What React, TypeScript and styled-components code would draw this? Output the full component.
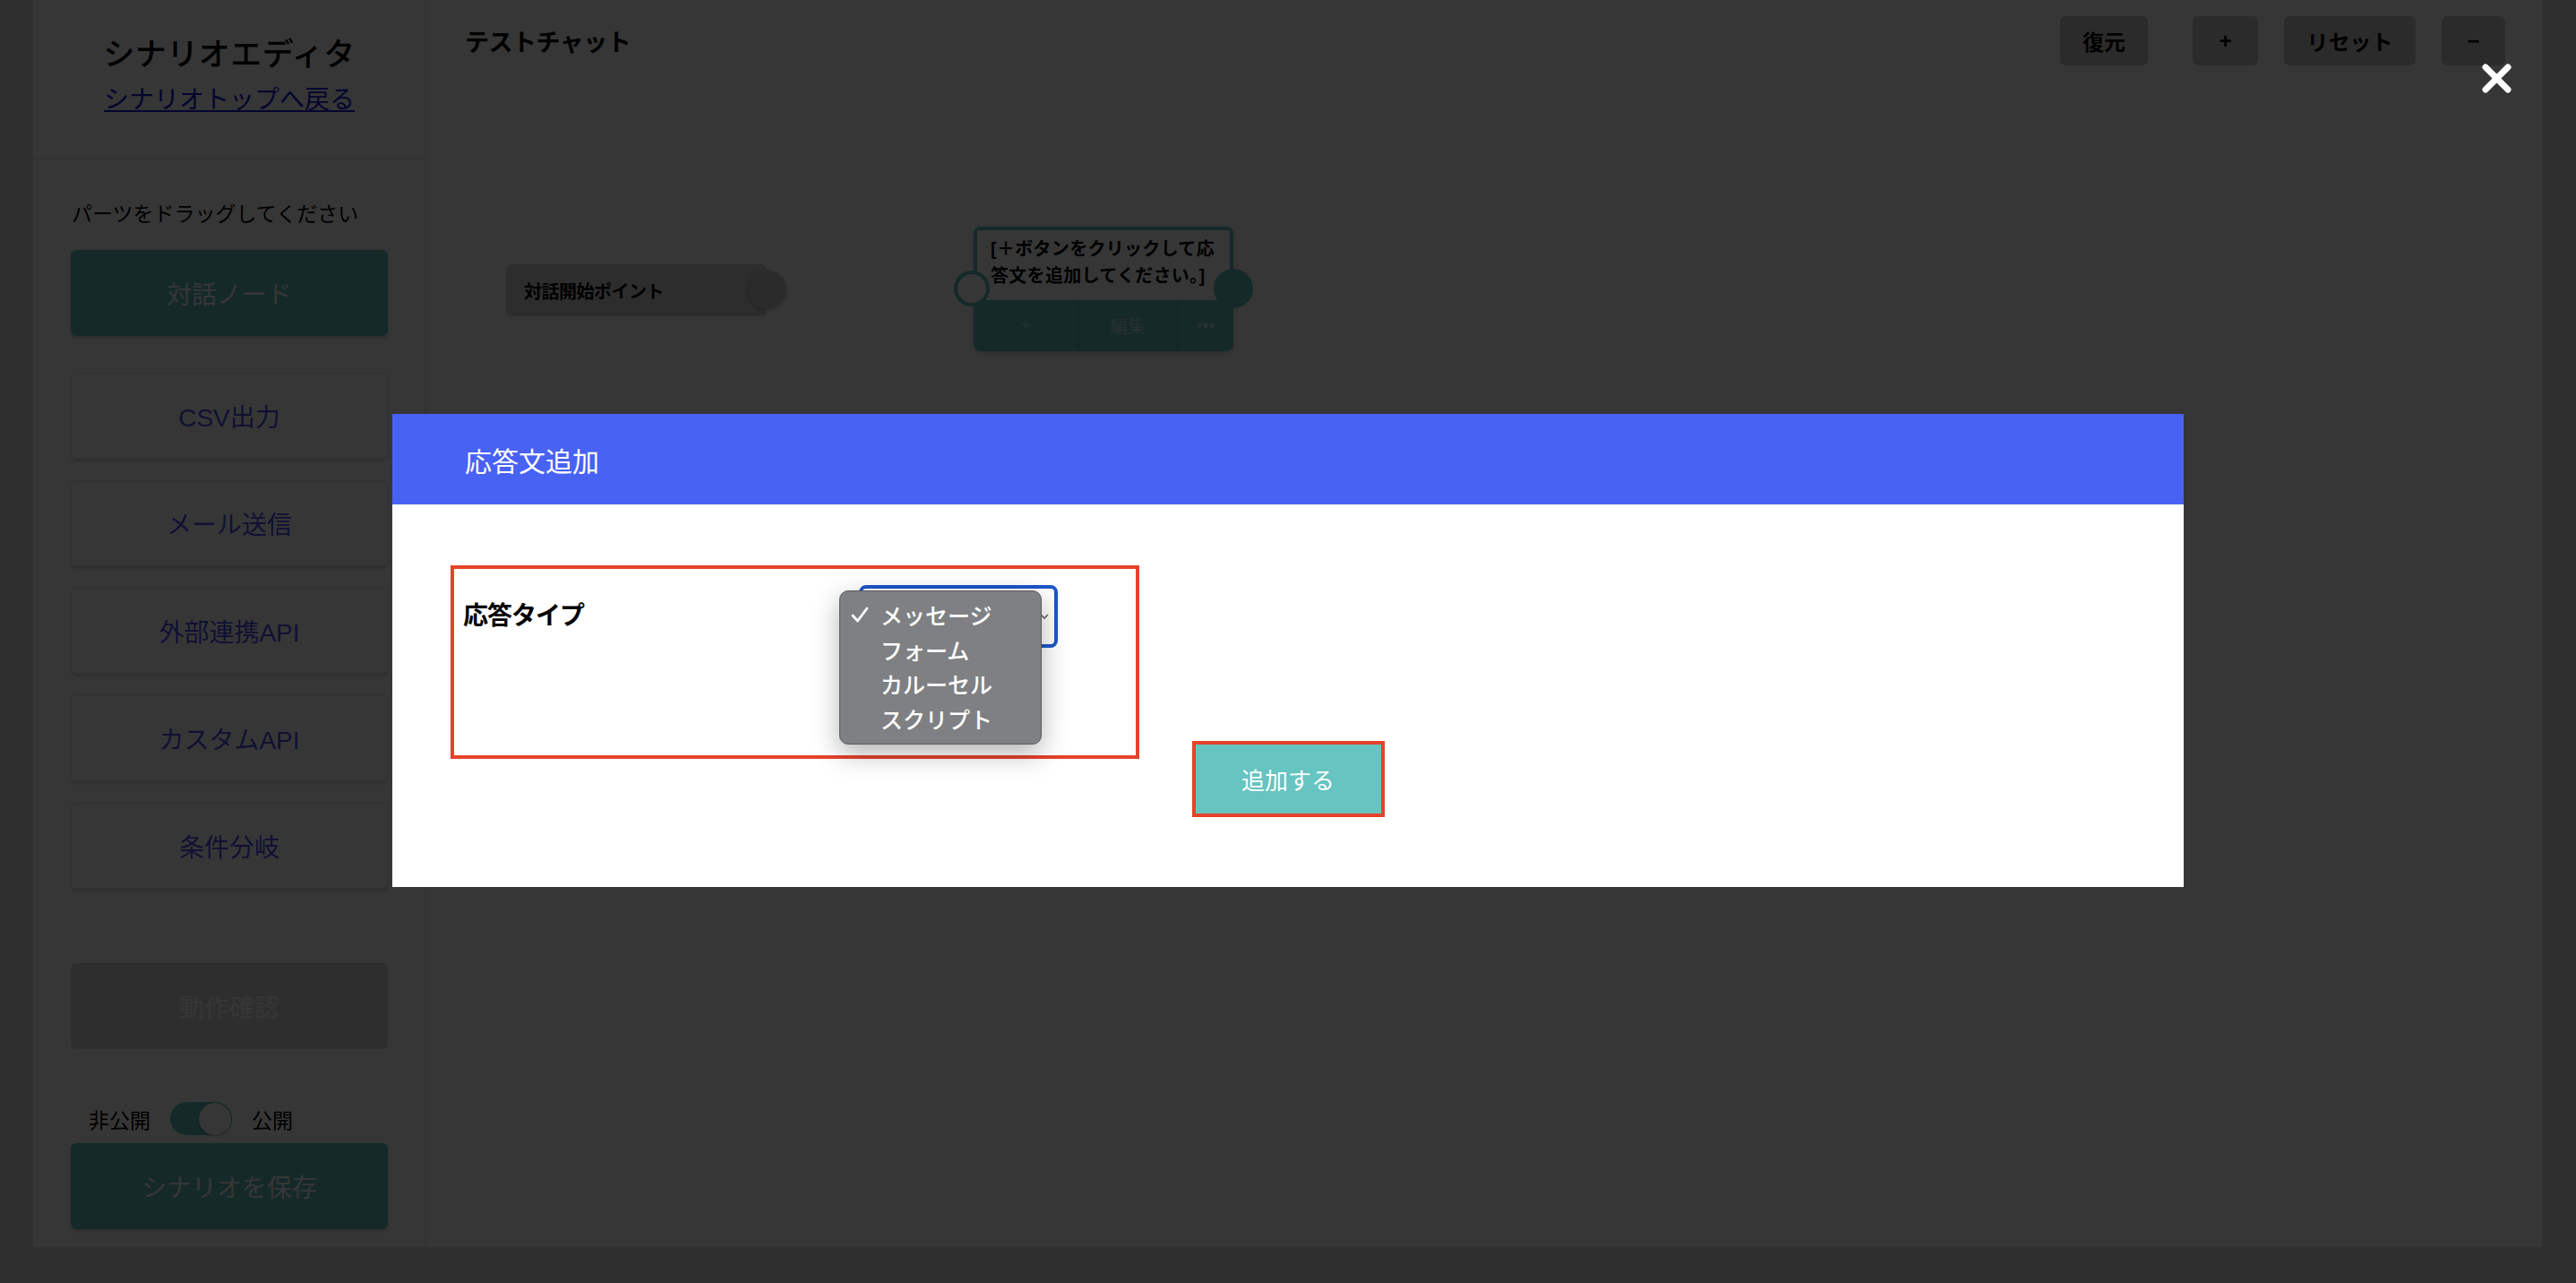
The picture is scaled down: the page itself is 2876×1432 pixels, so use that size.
import styled, { createGlobalStyle } from "styled-components";

const FONT = `"Liberation Sans", "Noto Sans CJK JP", sans-serif`;
const TEAL = "#5ec2bc";
const RED = "#e5432b";

const GlobalStyle = createGlobalStyle`
  html, body {
    margin: 0;
    padding: 0;
  }
  body {
    background: #dfdfe3;
    font-family: ${FONT};
    overflow: hidden;
  }
  * {
    box-sizing: border-box;
  }
`;

const parts = ["CSV出力", "メール送信", "外部連携API", "カスタムAPI", "条件分岐"];
const responseTypes = ["メッセージ", "フォーム", "カルーセル", "スクリプト"];

const App = () => {
  return (
    <>
      <GlobalStyle />
      <Page>
        <Sidebar>
          <SidebarHeader>
            <AppTitle>シナリオエディタ</AppTitle>
            <BackLink href="#">シナリオトップへ戻る</BackLink>
          </SidebarHeader>
          <SidebarBody>
            <Hint>パーツをドラッグしてください</Hint>
            <PartButton $variant="primary" $top={25}>
              対話ノード
            </PartButton>
            <PartList>
              {parts.map((p) => (
                <PartButton key={p} $variant="plain">
                  {p}
                </PartButton>
              ))}
            </PartList>
            <PartButton $variant="disabled" $top={83}>
              動作確認
            </PartButton>
            <ToggleRow>
              <ToggleLabel>非公開</ToggleLabel>
              <Switch>
                <Knob />
              </Switch>
              <ToggleLabel>公開</ToggleLabel>
            </ToggleRow>
            <PartButton $variant="primary" $top={9}>
              シナリオを保存
            </PartButton>
          </SidebarBody>
        </Sidebar>

        <Main>
          <Toolbar>
            <CanvasTitle>テストチャット</CanvasTitle>
            <ToolGroup>
              <ToolButton $w={98} $gapAfter={50}>
                復元
              </ToolButton>
              <ToolButton $w={73}>+</ToolButton>
              <ToolButton $w={147}>リセット</ToolButton>
              <ToolButton $w={71}>−</ToolButton>
            </ToolGroup>
          </Toolbar>

          <StartNode>
            対話開始ポイント
            <StartPort />
          </StartNode>

          <ResponseNode>
            <NodeText>[＋ボタンをクリックして応答文を追加してください。]</NodeText>
            <NodeActions>
              <NodeAction $w={117}>+</NodeAction>
              <NodeAction $w={111}>編集</NodeAction>
              <NodeAction $w={62}>•••</NodeAction>
            </NodeActions>
            <InPort />
            <OutPort />
          </ResponseNode>
        </Main>
      </Page>

      <Overlay>
        <CloseButton aria-label="close">
          <svg width="35" height="35" viewBox="0 0 35 35">
            <path
              d="M5 5 L30 30 M30 5 L5 30"
              stroke="#fff"
              strokeWidth="7"
              strokeLinecap="round"
            />
          </svg>
        </CloseButton>

        <Modal>
          <ModalHeader>応答文追加</ModalHeader>
          <ModalBody>
            <FieldRow>
              <FieldLabel>応答タイプ</FieldLabel>
              <SelectBox>
                <svg width="10" height="8" viewBox="0 0 10 8">
                  <path d="M1 2 L5 6 L9 2" stroke="#666" strokeWidth="1.6" fill="none" />
                </svg>
                <OptionList>
                  {responseTypes.map((t, i) => (
                    <OptionItem key={t}>
                      <Check>
                        {i === 0 && (
                          <svg width="20" height="18" viewBox="0 0 20 18">
                            <path
                              d="M2 10 L7.5 16 L18 2"
                              stroke="#fff"
                              strokeWidth="2.8"
                              fill="none"
                              strokeLinecap="round"
                              strokeLinejoin="round"
                            />
                          </svg>
                        )}
                      </Check>
                      {t}
                    </OptionItem>
                  ))}
                </OptionList>
              </SelectBox>
            </FieldRow>
            <Actions>
              <SubmitButton>追加する</SubmitButton>
            </Actions>
          </ModalBody>
        </Modal>
      </Overlay>
    </>
  );
};

/* page frame */

const Page = styled.div`
  width: 100vw;
  height: 100vh;
  display: flex;
  padding: 0 38px 40px 37px;
`;

const Sidebar = styled.aside`
  width: 439px;
  flex-shrink: 0;
  background: #fff;
  border-right: 1px solid #dcdcdc;
  display: flex;
  flex-direction: column;
`;

const SidebarHeader = styled.div`
  height: 177px;
  border-bottom: 1px solid #e4e4e4;
  display: flex;
  flex-direction: column;
  align-items: center;
  padding-top: 38px;
`;

const AppTitle = styled.h1`
  margin: 0;
  font-size: 35px;
  line-height: 45px;
  font-weight: 500;
  color: #000;
  letter-spacing: 0.5px;
`;

const BackLink = styled.a`
  margin-top: 12px;
  font-size: 28px;
  line-height: 34px;
  color: #1515d8;
  text-decoration: underline;
`;

const SidebarBody = styled.div`
  display: flex;
  flex-direction: column;
  padding: 0 42px 20px;
`;

const Hint = styled.p`
  margin: 47px 0 0 1px;
  font-size: 23px;
  line-height: 30px;
  color: #000;
`;

const PartButton = styled.div<{ $variant: "primary" | "plain" | "disabled"; $top?: number }>`
  height: 96px;
  margin-top: ${(p) => p.$top ?? 0}px;
  border-radius: 6px;
  display: flex;
  align-items: center;
  justify-content: center;
  font-size: 28px;
  box-shadow: 0 2px 5px rgba(0, 0, 0, 0.18);
  ${(p) =>
    p.$variant === "primary" &&
    `
    background: ${TEAL};
    color: #fff;
  `}
  ${(p) =>
    p.$variant === "plain" &&
    `
    background: #fff;
    color: #4f4ff0;
    border: 1px solid #ececec;
  `}
  ${(p) =>
    p.$variant === "disabled" &&
    `
    background: #dadada;
    color: #fdfdfd;
    box-shadow: none;
  `}
`;

const PartList = styled.div`
  margin-top: 41px;
  display: flex;
  flex-direction: column;
  gap: 24px;
`;

const ToggleRow = styled.div`
  margin-top: 59px;
  height: 37px;
  display: flex;
  align-items: center;
  padding-left: 20px;
  gap: 22px;
`;

const ToggleLabel = styled.span`
  font-size: 23px;
  color: #000;
`;

const Switch = styled.div`
  width: 69px;
  height: 37px;
  border-radius: 19px;
  background: ${TEAL};
  display: flex;
  align-items: center;
  justify-content: flex-end;
  padding-right: 1px;
`;

const Knob = styled.div`
  width: 36px;
  height: 36px;
  border-radius: 50%;
  background: #fff;
  box-shadow: 0 1px 3px rgba(0, 0, 0, 0.35);
`;

/* canvas */

const Main = styled.main`
  flex: 1;
  background: #fff;
  position: relative;
`;

const Toolbar = styled.div`
  display: flex;
  align-items: center;
  justify-content: space-between;
  padding: 18px 41px 0 43px;
`;

const CanvasTitle = styled.h2`
  margin: 0;
  font-size: 27px;
  font-weight: 600;
  color: #000;
  letter-spacing: -0.5px;
`;

const ToolGroup = styled.div`
  display: flex;
  gap: 29px;
`;

const ToolButton = styled.button<{ $w: number; $gapAfter?: number }>`
  width: ${(p) => p.$w}px;
  height: 55px;
  margin-right: ${(p) => (p.$gapAfter ? p.$gapAfter - 29 : 0)}px;
  border: none;
  border-radius: 6px;
  background: #cbcbcb;
  font-family: ${FONT};
  font-size: 24px;
  font-weight: 700;
  color: #000;
`;

const StartNode = styled.div`
  position: absolute;
  left: 89px;
  top: 295px;
  width: 291px;
  height: 58px;
  border-radius: 6px;
  background: #d2d2d2;
  display: flex;
  align-items: center;
  padding-left: 20px;
  font-size: 20px;
  font-weight: 600;
  color: #000;
  letter-spacing: -0.5px;
`;

const StartPort = styled.span`
  position: absolute;
  right: -22px;
  top: 7px;
  width: 43px;
  height: 43px;
  border-radius: 50%;
  background: #cacaca;
  box-shadow: 0 1px 4px rgba(0, 0, 0, 0.3);
`;

const ResponseNode = styled.div`
  position: absolute;
  left: 611px;
  top: 253px;
  width: 290px;
  border-radius: 8px;
  background: ${TEAL};
  padding: 4px 4px 0;
  box-shadow: 0 2px 6px rgba(0, 0, 0, 0.2);
`;

const NodeText = styled.div`
  background: #fff;
  height: 78px;
  padding: 6px 12px 0 15px;
  font-size: 20px;
  font-weight: 600;
  line-height: 30px;
  color: #000;
  letter-spacing: 0.3px;
`;

const NodeActions = styled.div`
  display: flex;
  height: 57px;
  margin: 0 -4px;
`;

const NodeAction = styled.div<{ $w: number }>`
  width: ${(p) => p.$w}px;
  display: flex;
  align-items: center;
  justify-content: center;
  font-size: 20px;
  color: rgba(255, 255, 255, 0.55);
  border-right: 1px solid rgba(0, 0, 0, 0.15);
  &:last-child {
    border-right: none;
  }
`;

const InPort = styled.span`
  position: absolute;
  left: -22px;
  top: 49px;
  width: 40px;
  height: 40px;
  border-radius: 50%;
  background: #fff;
  border: 4px solid ${TEAL};
`;

const OutPort = styled.span`
  position: absolute;
  right: -22px;
  top: 47px;
  width: 44px;
  height: 44px;
  border-radius: 50%;
  background: ${TEAL};
`;

/* dialog */

const Overlay = styled.div`
  position: fixed;
  inset: 0;
  background: rgba(0, 0, 0, 0.79);
  display: flex;
  align-items: center;
  justify-content: center;
  padding-top: 20px;
`;

const CloseButton = styled.button`
  position: absolute;
  top: 70px;
  right: 71px;
  padding: 0;
  border: none;
  background: none;
  width: 35px;
  height: 35px;
  display: flex;
`;

const Modal = styled.div`
  width: 2000px;
  background: #fff;
`;

const ModalHeader = styled.div`
  height: 101px;
  background: #4862f4;
  display: flex;
  align-items: center;
  padding-left: 81px;
  font-size: 30px;
  color: #fff;
`;

const ModalBody = styled.div`
  padding: 68px 65px 82px;
  display: flex;
  flex-direction: column;
`;

const FieldRow = styled.div`
  width: 769px;
  height: 216px;
  border: 4px solid ${RED};
  display: flex;
  align-items: flex-start;
  padding: 18px 0 0 10px;
`;

const FieldLabel = styled.label`
  width: 442px;
  line-height: 70px;
  font-size: 28px;
  font-weight: 700;
  color: #000;
  letter-spacing: -1px;
`;

const SelectBox = styled.div`
  position: relative;
  width: 222px;
  height: 70px;
  border: 4px solid #1c57c9;
  border-radius: 8px;
  background: #fff;
  display: flex;
  align-items: center;
  justify-content: flex-end;
  padding-right: 6px;
`;

const OptionList = styled.ul`
  position: absolute;
  left: -26px;
  top: 2px;
  width: 226px;
  margin: 0;
  padding: 7px 0 9px;
  list-style: none;
  background: #7f8083;
  border: 1px solid #5a5a5c;
  border-radius: 10px;
  box-shadow: 0 10px 30px rgba(0, 0, 0, 0.3);
`;

const OptionItem = styled.li`
  display: flex;
  align-items: center;
  height: 38.5px;
  padding-left: 12px;
  font-family: "Noto Sans CJK JP", sans-serif;
  font-size: 25px;
  font-weight: 500;
  color: #fff;
`;

const Check = styled.span`
  width: 33px;
  display: flex;
  align-items: center;
`;

const Actions = styled.div`
  margin-top: -16px;
  display: flex;
  justify-content: center;
`;

const SubmitButton = styled.button`
  width: 207px;
  height: 77px;
  border: none;
  outline: 4px solid ${RED};
  background: #66c4c1;
  font-family: ${FONT};
  font-size: 26px;
  color: #fff;
`;

export default App;
